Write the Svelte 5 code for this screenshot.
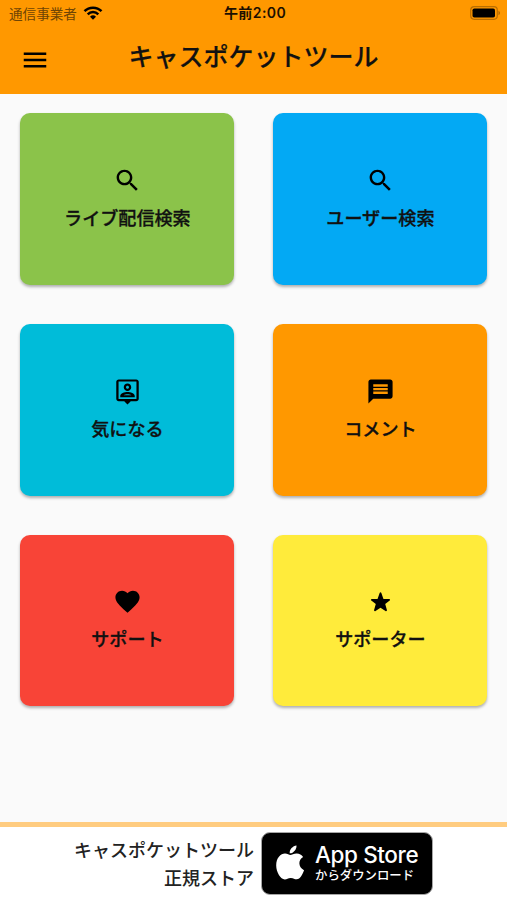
<script>
  const cards = [
    { label: "ライブ配信検索", icon: "search", color: "#8bc34a" },
    { label: "ユーザー検索", icon: "search", color: "#03a9f4" },
    { label: "気になる", icon: "person", color: "#00bcd9" },
    { label: "コメント", icon: "message", color: "#ff9800" },
    { label: "サポート", icon: "heart", color: "#f84437" },
    { label: "サポーター", icon: "star", color: "#ffeb3b" }
  ];

  const icons = {
    search: "M15.5 14h-.79l-.28-.27C15.41 12.59 16 11.11 16 9.5 16 5.91 13.09 3 9.5 3S3 5.91 3 9.5 5.91 16 9.5 16c1.61 0 3.09-.59 4.23-1.57l.27.28v.79l5 4.99L20.49 19l-4.99-5zm-6 0C7.01 14 5 11.99 5 9.5S7.01 5 9.5 5 14 7.01 14 9.5 11.99 14 9.5 14z",
    person: "M12 11.5c1.75 0 3.1-1.35 3.1-3.050s-1.350-3.050-3.100-3.050-3.100 1.350-3.100 3.050 1.350 3.050 3.100 3.050zm0-4.300c.7 0 1.250.55 1.250 1.250s-.55 1.250-1.250 1.250-1.250-.55-1.250-1.250.55-1.250 1.250-1.250zM18 16.700v-1c0-2.100-3.600-3.200-6-3.200s-6 1.100-6 3.200v1zM8.800 15.200c.8-.6 2.100-.9 3.200-.9s2.400.3 3.200.9zM19.200 2H4.800C3.600 2 2.700 2.900 2.700 4v14c0 1.100.9 2 2.100 2h4.500l2.700 2.800 2.700-2.800h4.500c1.200 0 2.100-.9 2.100-2V4c0-1.100-.9-2-2.100-2zm.2 16.200H4.600V3.800h14.800z",
    message: "M20 2H4c-1.1 0-1.99.9-1.99 2L2 22l4-4h14c1.1 0 2-.9 2-2V4c0-1.1-.9-2-2-2zm-2 12H6v-2h12v2zm0-3H6V9h12v2zm0-3H6V6h12v2z",
    heart: "M12 21.35l-1.45-1.32C5.4 15.36 2 12.28 2 8.5 2 5.42 4.42 3 7.5 3c1.74 0 3.41.81 4.5 2.09C13.09 3.81 14.76 3 16.5 3 19.58 3 22 5.42 22 8.5c0 3.78-3.4 6.86-8.55 11.54L12 21.35z",
    star: "M11.3 4.9c.25-.7 1.15-.7 1.4 0l1.75 5h4.7c.75 0 1.05.9.45 1.350l-3.700 2.900 1.400 4.900c.2.7-.55 1.200-1.150.8L12 17.200l-4.150 2.650c-.6.4-1.350-.1-1.150-.8l1.400-4.900-3.700-2.900c-.6-.45-.3-1.350.45-1.350h4.700z"
  };
</script>

<div class="app">
  <header>
    <div class="status">
      <div class="carrier">
        <span>通信事業者</span>
        <svg width="20" height="14" viewBox="0 0 20 14">
          <path d="M1.5 5.2a12 12 0 0 1 17 0M4.7 8.3a7.5 7.5 0 0 1 10.6 0" fill="none" stroke="#000" stroke-width="2.5" />
          <path d="M7 10.7a4.3 4.3 0 0 1 6 0L10 13.7z" />
        </svg>
      </div>
      <div class="time">午前2:00</div>
      <div class="battery">
        <svg width="31" height="14" viewBox="0 0 31 14">
          <rect x=".7" y=".7" width="26.6" height="12.6" rx="3.5" fill="none" stroke="#945800" stroke-opacity=".65" stroke-width="1.2" />
          <rect x="2.5" y="2.5" width="22.5" height="9" rx="1.8" />
          <path d="M28.5 4.8c2 .8 2 3.6 0 4.4z" fill="#945800" fill-opacity=".8" />
        </svg>
      </div>
    </div>
    <div class="toolbar">
      <button class="menu" aria-label="menu">
        <svg viewBox="0 0 24 24"><path d="M3 18h18v-2H3v2zm0-5h18v-2H3v2zm0-7v2h18V6H3z" /></svg>
      </button>
      <h1>キャスポケットツール</h1>
    </div>
  </header>

  <main>
    {#each cards as card}
      <button class="card" style="background: {card.color}">
        <svg viewBox="0 0 24 24"><path fill-rule="evenodd" d={icons[card.icon]} /></svg>
        <span>{card.label}</span>
      </button>
    {/each}
  </main>

  <footer>
    <p>キャスポケットツール<br />正規ストア</p>
    <div class="badge">
      <svg class="apple" viewBox="0 0 28 36">
        <path d="M20.5.5c.3 4-3.2 8-6.8 7.8-.4-3.8 3.1-7.4 6.8-7.8z" />
        <path d="M14.3 10.1c1.5 0 3.7-1.7 6.5-1.6 2.6.1 4.9 1.3 6.3 3.5-5.5 3.3-4.7 10.9 1 13.2-1.2 3.4-3.9 9-7.3 9.1-2.3.1-3.1-1.4-6-1.4s-3.8 1.4-5.9 1.5C4.7 34.5.2 27.2.2 20.5c0-7.6 4.5-11.8 8.8-11.9 2.3 0 4.3 1.5 5.3 1.5z" />
      </svg>
      <div class="store">
        <span class="name">App Store</span>
        <span class="download">からダウンロード</span>
      </div>
    </div>
  </footer>
</div>

<style>
  :global(body) {
    margin: 0;
  }
  .app {
    display: flex;
    flex-direction: column;
    height: 900px;
    background: #fafafa;
    color: #111;
    font-family: "Noto Sans CJK JP", sans-serif;
    overflow: hidden;
  }
  header {
    height: 94px;
    background: #ff9800;
  }
  .status {
    display: grid;
    grid-template-columns: 1fr auto 1fr;
    align-items: center;
    height: 26px;
    padding: 0 6px 0 9px;
  }
  .carrier {
    display: flex;
    align-items: center;
    gap: 6px;
    color: #6e4404;
    font-size: 13.6px;
    line-height: 20px;
  }
  .time {
    color: #1c1000;
    font-family: Inter, "Noto Sans CJK JP", sans-serif;
    font-size: 14px;
    font-weight: 600;
    letter-spacing: 0.4px;
    line-height: 20px;
  }
  .battery {
    display: flex;
    justify-content: flex-end;
  }
  .toolbar {
    display: grid;
    grid-template-columns: 70px 1fr 70px;
    align-items: center;
    height: 60px;
  }
  button {
    border: none;
    padding: 0;
    font-family: inherit;
    color: inherit;
  }
  .menu {
    display: flex;
    justify-content: center;
    margin-top: 7px;
    background: none;
  }
  .menu svg {
    width: 30px;
    height: 30px;
  }
  h1 {
    margin: 0 0 3px;
    font-size: 25px;
    font-weight: 500;
    line-height: 36px;
    text-align: center;
    white-space: nowrap;
    -webkit-text-stroke: 0.2px;
  }
  main {
    display: grid;
    grid-template-columns: 214px 214px;
    grid-auto-rows: 171.6px;
    gap: 39px;
    flex: 1;
    padding: 19.4px 20px 0 20.4px;
  }
  .card {
    display: flex;
    flex-direction: column;
    align-items: center;
    justify-content: center;
    border-radius: 10px;
    box-shadow: 0 2px 3px rgba(0, 0, 0, 0.3);
  }
  .card svg {
    width: 29px;
    height: 29px;
  }
  .card span {
    margin-top: 8px;
    font-size: 18.1px;
    font-weight: 500;
    line-height: 29px;
    -webkit-text-stroke: 0.3px;
  }
  footer {
    display: flex;
    box-sizing: border-box;
    height: 78px;
    padding: 5px 74px 0 0;
    border-top: 5px solid #ffcc80;
    background: #fff;
    justify-content: flex-end;
    gap: 7px;
  }
  footer p {
    margin: 3px 0 0;
    color: #222;
    font-size: 18px;
    font-weight: 500;
    line-height: 28px;
    text-align: right;
  }
  .badge {
    display: flex;
    box-sizing: border-box;
    width: 172px;
    height: 63px;
    padding: 0 0 0 14px;
    border: 1px solid #a6a6a6;
    border-radius: 9px;
    background: #000;
    color: #fff;
  }
  .apple {
    width: 28px;
    height: 36px;
    margin-top: 12px;
    fill: #fff;
  }
  .store {
    display: flex;
    flex-direction: column;
    margin: 8px 0 0 11px;
    white-space: nowrap;
  }
  .name {
    font-family: Inter, sans-serif;
    font-size: 22.5px;
    font-weight: 500;
    letter-spacing: -0.4px;
    line-height: 28px;
  }
  .download {
    font-size: 12.4px;
    font-weight: 500;
    line-height: 13px;
  }
</style>
